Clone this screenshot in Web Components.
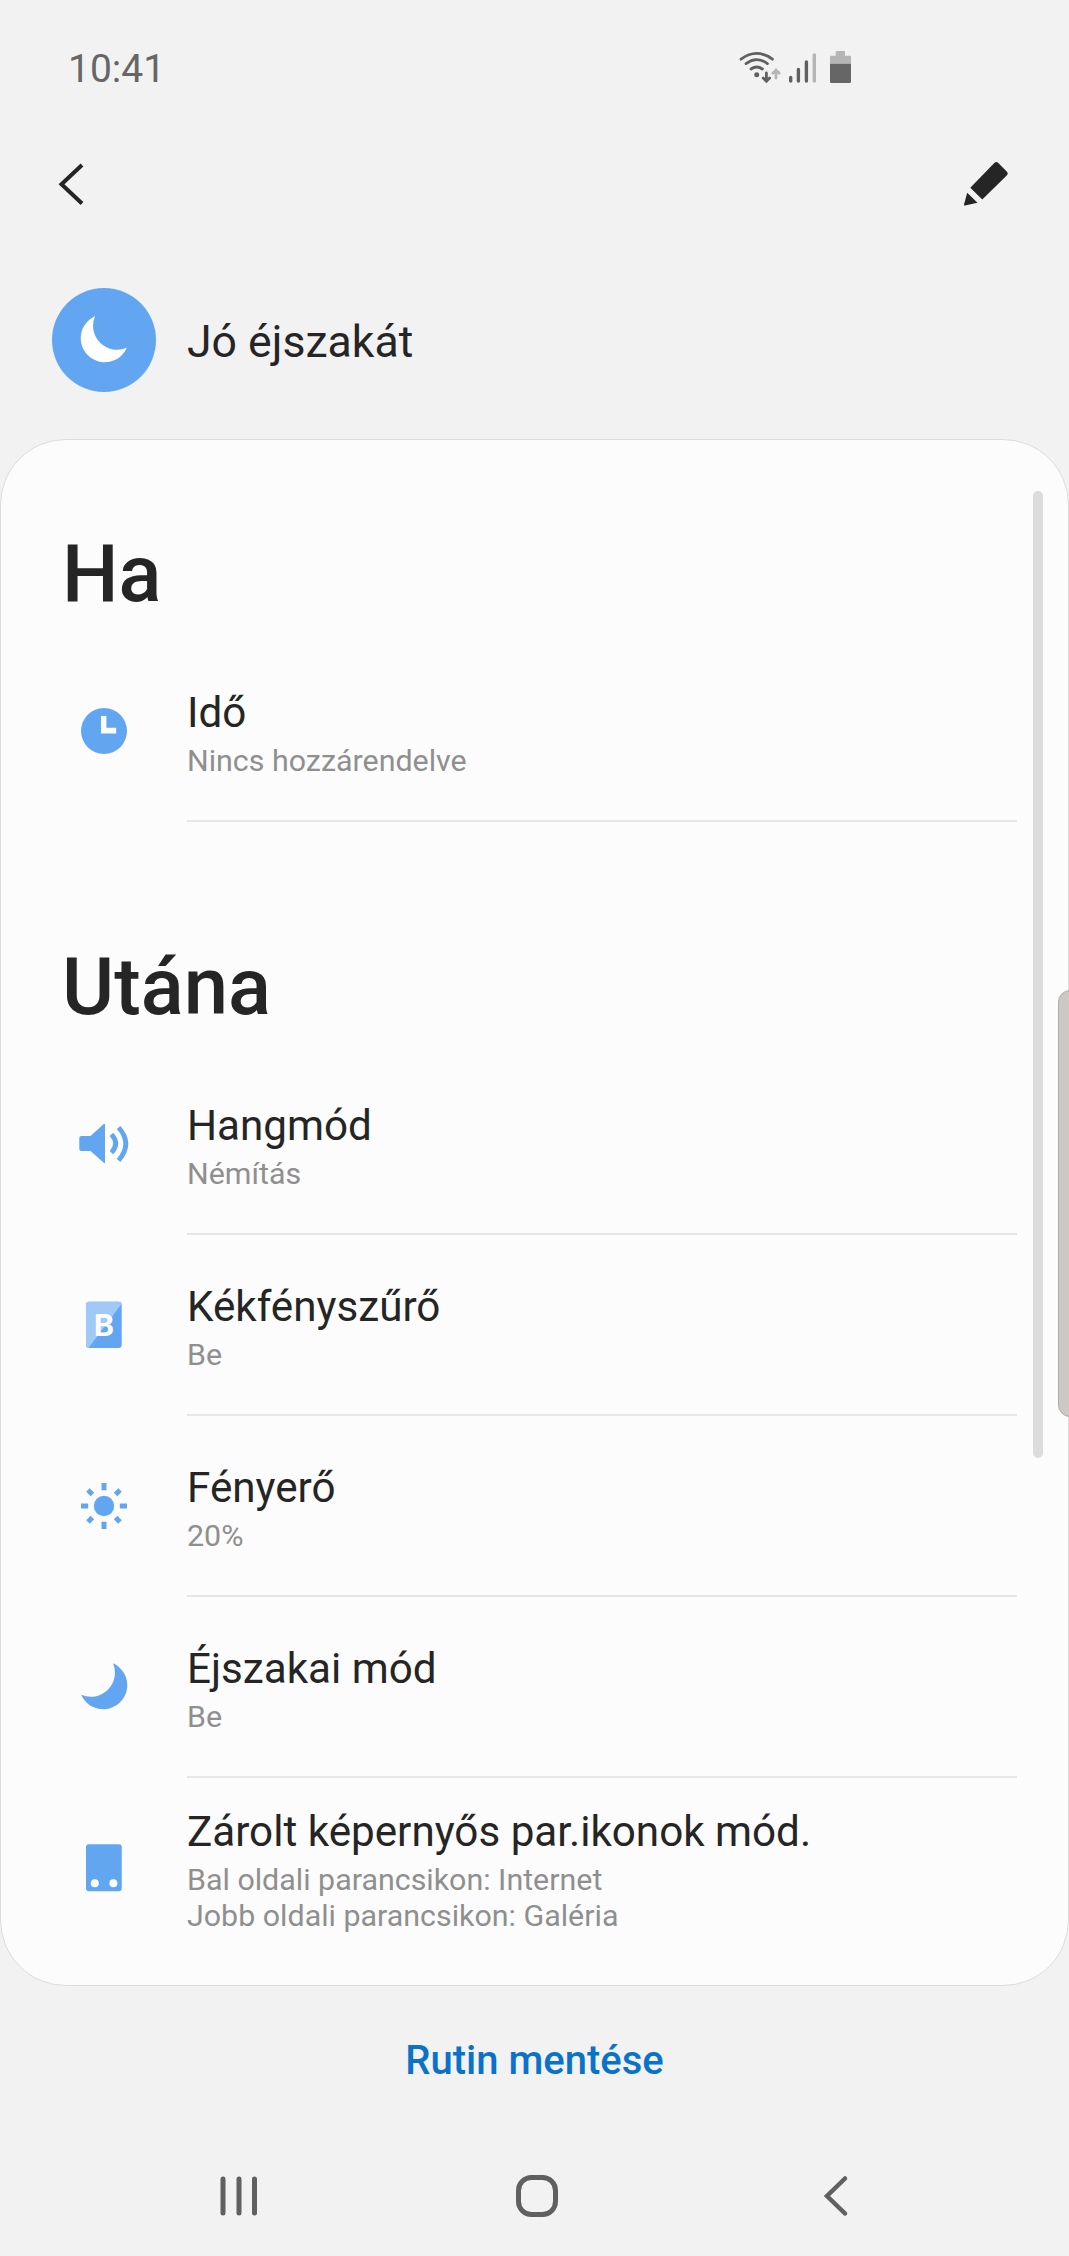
<!DOCTYPE html>
<html lang="hu">
<head>
<meta charset="utf-8">
<title>Jó éjszakát</title>
<style>
    body {
        margin: 0;
        background-color: #f2f2f2;
        font-family: Roboto, sans-serif;
    }
</style>
</head>
<body>

<routine-screen>
    <status-bar slot="top" time="10:41"></status-bar>
    <tool-bar slot="top"></tool-bar>
    <routine-header slot="top">Jó éjszakát</routine-header>

    <routine-card>
        <routine-section heading="Ha">
            <routine-row icon="clock" label="Idő">Nincs hozzárendelve</routine-row>
        </routine-section>
        <routine-section heading="Utána">
            <routine-row icon="sound" label="Hangmód">Némítás</routine-row>
            <routine-row icon="filter" label="Kékfényszűrő">Be</routine-row>
            <routine-row icon="sun" label="Fényerő">20%</routine-row>
            <routine-row icon="moon" label="Éjszakai mód">Be</routine-row>
            <routine-row icon="lock" label="Zárolt képernyős par.ikonok mód." last>Bal oldali parancsikon: Internet<br>Jobb oldali parancsikon: Galéria</routine-row>
        </routine-section>
    </routine-card>

    <save-button slot="bottom">Rutin mentése</save-button>
    <nav-bar slot="bottom"></nav-bar>
</routine-screen>

<script>
const MOON = '<path d="M37 4.3A24 24 0 1 1 5.2 35.7A24 24 0 0 0 37 4.3Z"/>';

const ICONS = {
    clock: `
        <circle cx="28" cy="28" r="23"/>
        <path d="M25 13h5.4v11.8h9.8v5.6H25z" fill="#fcfcfc"/>`,
    sound: `
        <path d="M5.3 20h9.2L27.8 8q1.2-.8 1.2.6v37.6q0 1.4-1.2.6L14.5 35H5.3q-2 0-2-2V22q0-2 2-2z"/>
        <path d="M35.4 18.3q8.6 9 0 18.4M42.6 11.5q14.4 16 0 33" fill="none" stroke="#62a6f2" stroke-width="4.8"/>`,
    filter: `
        <rect x="10" y="4.7" width="35.7" height="46.3" rx="3"/>
        <path d="M13 4.7h29.7q2 0 3 2L12.5 51q-2.5-.6-2.5-3V7.7q0-3 3-3z" fill="#a1c9f7"/>
        <text x="17.7" y="39.1" font-size="32" font-weight="700" fill="#fcfcfc">B</text>`,
    sun: `
        <circle cx="28" cy="28" r="10.2"/>
        <g fill="none" stroke="#62a6f2" stroke-width="5">
            <path d="M28 5v7.2M28 43.8V51M5 28h7.2M43.8 28H51"/>
            <path d="M12 12l4.4 4.4M39.6 39.6L44 44M12 44l4.4-4.4M39.6 16.4L44 12"/>
        </g>`,
    moon: MOON,
    lock: `
        <rect x="10" y="4.3" width="35.8" height="47" rx="3"/>
        <circle cx="18.8" cy="43.2" r="4" fill="#fcfcfc"/>
        <circle cx="37.4" cy="43.2" r="4" fill="#fcfcfc"/>`
};


class BaseElement extends HTMLElement {
    constructor() {
        super();
        this.attachShadow({ mode: 'open' });
    }

    connectedCallback() {
        this.shadowRoot.innerHTML = `
            <style>
                * { box-sizing: border-box; }
                svg { display: block; flex: none; }
                ${this.css()}
            </style>
            ${this.template()}
        `;
    }
}


/* SCREEN */

class RoutineScreen extends BaseElement {
    css() {
        return `
            :host {
                display: flex;
                flex-direction: column;
                position: relative;
                width: 1069px;
                height: 2256px;
                overflow: hidden;
            }

            /* edge panel handle, lies over the card */
            .edge-handle {
                position: absolute;
                right: -2px;
                top: 990px;
                width: 13px;
                height: 427px;
                background-color: #cdc8c6;
                border: 1px solid #aeaeae;
                border-radius: 12px 0 0 12px;
            }
        `;
    }

    template() {
        return `
            <slot name="top"></slot>
            <slot></slot>
            <slot name="bottom"></slot>
            <div class="edge-handle"></div>
        `;
    }
}
customElements.define('routine-screen', RoutineScreen);


/* TOP */

class StatusBar extends BaseElement {
    css() {
        return `
            :host {
                display: flex;
                justify-content: space-between;
                align-items: center;
                box-sizing: border-box;
                height: 136px;
                padding: 0 215px 0 68px;
                color: #666;
                font-size: 39px;
            }

            span { padding-top: 1px; }
        `;
    }

    template() {
        return `
            <span>${this.getAttribute('time')}</span>
            <svg width="118" height="40" viewBox="736 48 118 40">
                <g fill="none" stroke="#606060" stroke-width="2.8" stroke-linecap="round">
                    <path d="M741 59.2q15.7-11.6 31.4 0M746 63.6q10.7-8 21.4 0M751 69q5.7-4 11.4 0"/>
                    <path d="M766.4 73v8M763.2 78l3.2 3.2 3.2-3.2"/>
                    <path d="M776 78v-8M772.8 73.2l3.2-3.2 3.2 3.2" stroke="#b5b5b5"/>
                </g>
                <circle cx="756.7" cy="74.7" r="2.5" fill="#606060"/>
                <g stroke="#606060" stroke-width="3.4" stroke-linecap="round">
                    <path d="M790.7 77.5v3.5M798.4 69.5v11.5M806.4 62v19"/>
                    <path d="M814.3 55v26" stroke="#b5b5b5"/>
                </g>
                <path d="M831 55.7h4.7v-3.7q0-1 1-1h7.3q1 0 1 1v3.7h5q1 0 1 1v7h-21v-7q0-1 1-1z" fill="#b5b5b5"/>
                <path d="M830 63.7h21v18q0 1.2-1.2 1.2h-18.6q-1.2 0-1.2-1.2z" fill="#666"/>
            </svg>
        `;
    }
}
customElements.define('status-bar', StatusBar);


class ToolBar extends BaseElement {
    css() {
        return `
            :host {
                display: flex;
                justify-content: space-between;
                align-items: center;
                box-sizing: border-box;
                height: 96px;
                padding: 0 59px 0 56px;
            }
        `;
    }

    template() {
        return `
            <svg width="30" height="48" viewBox="56 160 30 48">
                <path d="M82 165L61.5 184.2 82 203.5" fill="none" stroke="#252525" stroke-width="4"/>
            </svg>
            <svg width="48" height="48" viewBox="962 160 48 48" fill="#252525">
                <path d="M970.3 187.7L994.3 163q2-2 4 0l8.4 8.6q2 2 0 4L982.3 199.5z"/>
                <path d="M967.2 192.7L977.5 202.7 965 205.6q-1.2.2-1-1z"/>
            </svg>
        `;
    }
}
customElements.define('tool-bar', ToolBar);


class RoutineHeader extends BaseElement {
    css() {
        return `
            :host {
                display: flex;
                align-items: center;
                gap: 31px;
                box-sizing: border-box;
                height: 207px;
                padding: 8px 52px 0;
                color: #252525;
                font-size: 44.6px;
            }

            .badge {
                display: flex;
                justify-content: center;
                align-items: center;
                width: 104px;
                height: 104px;
                border-radius: 50%;
                background-color: #62a6f2;
            }

            svg { transform: scaleX(-1); }
            .name { padding-top: 5px; }
        `;
    }

    template() {
        return `
            <div class="badge">
                <svg width="56" height="56" viewBox="0 0 56 56" fill="white">${MOON}</svg>
            </div>
            <div class="name"><slot></slot></div>
        `;
    }
}
customElements.define('routine-header', RoutineHeader);


/* CARD */

class RoutineCard extends BaseElement {
    css() {
        return `
            :host {
                display: block;
                position: relative;
                box-sizing: border-box;
                height: 1547px;
                border: 1px solid #dcdcdc;
                border-radius: 66px;
                background-color: #fcfcfc;
            }

            .scrollbar {
                position: absolute;
                top: 51px;
                right: 25px;
                width: 10px;
                height: 967px;
                border-radius: 5px;
                background-color: #dcdcdc;
            }
        `;
    }

    template() {
        return `
            <slot></slot>
            <div class="scrollbar"></div>
        `;
    }
}
customElements.define('routine-card', RoutineCard);


class RoutineSection extends BaseElement {
    css() {
        return `
            :host { display: block; }

            h2 {
                display: flex;
                align-items: flex-end;
                height: 201px;
                margin: 0;
                padding: 0 61px 21px;
                color: #252525;
                font-size: 79.7px;
                font-weight: 500;
                line-height: 92px;
            }

            :host(:not(:first-child)) h2 { height: 232px; }
        `;
    }

    template() {
        return `
            <h2>${this.getAttribute('heading')}</h2>
            <slot></slot>
        `;
    }
}
customElements.define('routine-section', RoutineSection);


class RoutineRow extends BaseElement {
    css() {
        return `
            :host {
                display: flex;
                align-items: center;
                height: 181px;
                padding: 0 51px 0 75px;
            }

            svg { margin-bottom: 1px; }

            .text {
                flex: 1;
                display: flex;
                flex-direction: column;
                justify-content: center;
                height: 100%;
                margin-left: 55px;
                padding-top: 2px;
                border-bottom: 2px solid #e6e6e6;
            }
            :host([last]) .text { border-color: transparent; }

            .label {
                color: #252525;
                font-size: 42.2px;
                line-height: 56px;
            }
            .value {
                margin-top: 2px;
                color: #8f8f8f;
                font-size: 30.4px;
                line-height: 35.5px;
            }
        `;
    }

    template() {
        return `
            <svg width="56" height="56" viewBox="0 0 56 56" fill="#62a6f2">${ICONS[this.getAttribute('icon')]}</svg>
            <div class="text">
                <div class="label">${this.getAttribute('label')}</div>
                <div class="value"><slot></slot></div>
            </div>
        `;
    }
}
customElements.define('routine-row', RoutineRow);


/* BOTTOM */

class SaveButton extends BaseElement {
    css() {
        return `
            :host {
                display: flex;
                justify-content: center;
                height: 150px;
            }

            button {
                border: none;
                background: none;
                padding: 0;
                color: #0b72c9;
                font: 500 40px/150px Roboto, sans-serif;
            }
        `;
    }

    template() {
        return `<button><slot></slot></button>`;
    }
}
customElements.define('save-button', SaveButton);


class NavBar extends BaseElement {
    css() {
        return `
            :host {
                display: flex;
                align-items: center;
                height: 120px;
                padding: 0 219px;
            }

            .home { margin: 0 261px 0 254px; }
        `;
    }

    template() {
        return `
            <svg width="40" height="48" viewBox="0 0 40 48">
                <path d="M4 7v34M20 7v34M35.5 7v34" stroke="#606060" stroke-width="5" stroke-linecap="round"/>
            </svg>
            <svg class="home" width="48" height="48" viewBox="0 0 48 48">
                <rect x="5.500" y="5.500" width="37" height="37" rx="13" fill="none" stroke="#606060" stroke-width="5"/>
            </svg>
            <svg width="28" height="48" viewBox="0 0 28 48">
                <path d="M23 6.5L5 24 23 41.5" fill="none" stroke="#606060" stroke-width="4.5" stroke-linecap="round"/>
            </svg>
        `;
    }
}
customElements.define('nav-bar', NavBar);
</script>
</body>
</html>
